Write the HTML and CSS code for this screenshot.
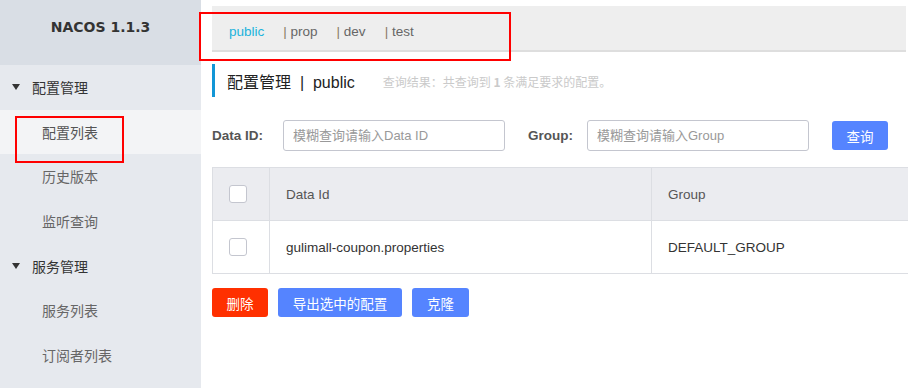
FILE: index.html
```html
<!DOCTYPE html>
<html lang="zh-CN">
<head>
    <meta charset="UTF-8">
    <title>Nacos</title>
    <link rel="stylesheet" href="styles.css">
</head>
<body>
    <div class="layout">
        <aside class="sidebar">
            <div class="logo">NACOS 1.1.3</div>
            <div class="menu-title"><span class="caret"></span>配置管理</div>
            <div class="menu-item active">配置列表</div>
            <div class="menu-item">历史版本</div>
            <div class="menu-item">监听查询</div>
            <div class="menu-title"><span class="caret"></span>服务管理</div>
            <div class="menu-item">服务列表</div>
            <div class="menu-item">订阅者列表</div>
        </aside>

        <main class="main">
            <div class="ns-bar">
                <span class="ns current">public</span>
                <span class="ns"><i>|</i> prop</span>
                <span class="ns"><i>|</i> dev</span>
                <span class="ns"><i>|</i> test</span>
            </div>

            <div class="page-title">
                <span class="title-text">配置管理 &nbsp;|&nbsp; public</span>
                <span class="hint">查询结果：共查询到 <b>1</b> 条满足要求的配置。</span>
            </div>

            <div class="search-row">
                <label class="field-label id-label" for="data-id">Data ID:</label>
                <input class="field" id="data-id" type="text" placeholder="模糊查询请输入Data ID">
                <label class="field-label group-label" for="group">Group:</label>
                <input class="field" id="group" type="text" placeholder="模糊查询请输入Group">
                <button class="btn btn-primary search-btn" type="button">查询</button>
            </div>

            <table class="config-table">
                <thead>
                    <tr>
                        <th class="col-check"><span class="checkbox"></span></th>
                        <th class="col-id">Data Id</th>
                        <th>Group</th>
                    </tr>
                </thead>
                <tbody>
                    <tr>
                        <td class="col-check"><span class="checkbox"></span></td>
                        <td class="col-id">gulimall-coupon.properties</td>
                        <td>DEFAULT_GROUP</td>
                    </tr>
                </tbody>
            </table>

            <div class="actions">
                <button class="btn btn-danger btn-del" type="button">删除</button>
                <button class="btn btn-primary btn-export" type="button">导出选中的配置</button>
                <button class="btn btn-primary btn-clone" type="button">克隆</button>
            </div>
        </main>
    </div>

    <!-- annotation boxes drawn over the screenshot -->
    <div class="mark mark-ns"></div>
    <div class="mark mark-menu"></div>
</body>
</html>
```

FILE: styles.css
```css
body {
    margin: 0;
    font-family: "Liberation Sans", "Noto Sans CJK SC", sans-serif;
    font-size: 14px;
    color: #333;
    background: #fff;
}
.layout {
    display: flex;
    height: 388px;
    overflow: hidden;
}
.sidebar {
    flex: 0 0 201px;
    background-color: #e6e9ee;
    font-family: "Noto Sans CJK SC", sans-serif;
}
.logo {
    height: 65px;
    box-sizing: border-box;
    padding-top: 16px;
    background-color: #d9dee5;
    text-align: center;
    font-family: "DejaVu Sans", "Liberation Sans", sans-serif;
    font-weight: bold;
    font-size: 14px;
    line-height: 22px;
    color: #333;
}
.menu-title, .menu-item {
    height: 44.6px;
    display: flex;
    align-items: center;
    line-height: 20px;
}
.menu-title {
    padding-left: 12px;
    color: #333;
}
.caret {
    width: 0;
    height: 0;
    border-left: 4.5px solid transparent;
    border-right: 4.5px solid transparent;
    border-top: 6px solid #333;
    margin-right: 12px;
}
.menu-item {
    padding-left: 42px;
    color: #666;
}
.menu-item.active {
    background-color: #f3f4f6;
    color: #555;
}

.main {
    flex: 1;
    padding-left: 11px;
    min-width: 0;
    overflow: hidden;
}
.ns-bar {
    margin-top: 6px;
    height: 46px;
    box-sizing: border-box;
    background-color: #eeeeee;
    border-bottom: 2px solid #dedede;
    display: flex;
    align-items: center;
    padding: 7px 0 0 17px;
    margin-right: 2px;
    font-size: 13.5px;
}
.ns {
    color: #666;
    margin-right: 19px;
    line-height: 20px;
}
.ns i {
    font-style: normal;
    color: #8a7a66;
}
.ns.current {
    color: #20b3dc;
}

.page-title {
    margin-top: 12px;
    height: 33px;
    border-left: 3px solid #1296d6;
    padding-left: 12px;
    display: flex;
    align-items: center;
}
.title-text {
    font-size: 16px;
    color: #222;
    margin-right: 28px;
    padding-top: 1px;
}
.hint {
    font-size: 12px;
    color: #cacaca;
    font-family: "Noto Sans CJK SC", sans-serif;
    padding-top: 2px;
}

.search-row {
    margin-top: 23px;
    display: flex;
    align-items: center;
    height: 31px;
}
.field-label {
    font-weight: bold;
    color: #555;
    font-size: 13.5px;
}
.id-label {
    width: 71px;
}
.group-label {
    margin-left: 23px;
    width: 59px;
}
.field {
    width: 222px;
    height: 31px;
    box-sizing: border-box;
    border: 1px solid #c4c6cf;
    border-radius: 3px;
    padding: 0 9px;
    font-family: inherit;
    font-size: 13px;
    color: #333;
}
.field::placeholder {
    color: #999;
}
.search-btn {
    margin-left: 23px;
    width: 56px;
    height: 31px;
}
.btn {
    border: none;
    border-radius: 3px;
    color: #fff;
    font-family: "Noto Sans CJK SC", sans-serif;
    font-size: 13.5px;
    height: 29px;
    padding: 0;
    cursor: pointer;
}
.btn-primary {
    background-color: #5584ff;
}
.btn-danger {
    background-color: #ff3000;
}

.config-table {
    margin-top: 16px;
    width: 700px;
    border-collapse: collapse;
    table-layout: fixed;
}
.config-table th, .config-table td {
    border: 1px solid #dcdee3;
    height: 52px;
    padding: 0 16px;
    text-align: left;
    font-weight: normal;
    font-size: 13.5px;
}
.config-table th {
    background-color: #ebecf0;
    color: #555;
}
.config-table td {
    color: #333;
}
.col-check {
    width: 24px;
    text-align: center;
}
.col-id {
    width: 349px;
}
.checkbox {
    display: inline-block;
    width: 16px;
    height: 16px;
    border: 1px solid #c4c6cf;
    border-radius: 3px;
    background: #fff;
    vertical-align: middle;
}

.actions {
    margin-top: 14px;
    display: flex;
    gap: 10px;
}
.btn-del {
    width: 56px;
}
.btn-export {
    width: 124px;
}
.btn-clone {
    width: 57px;
}

.mark {
    position: absolute;
    border: 2px solid #f00;
    box-sizing: border-box;
}
.mark-ns {
    left: 199px;
    top: 12px;
    width: 312px;
    height: 49px;
}
.mark-menu {
    left: 15px;
    top: 116px;
    width: 109px;
    height: 47px;
}
```
